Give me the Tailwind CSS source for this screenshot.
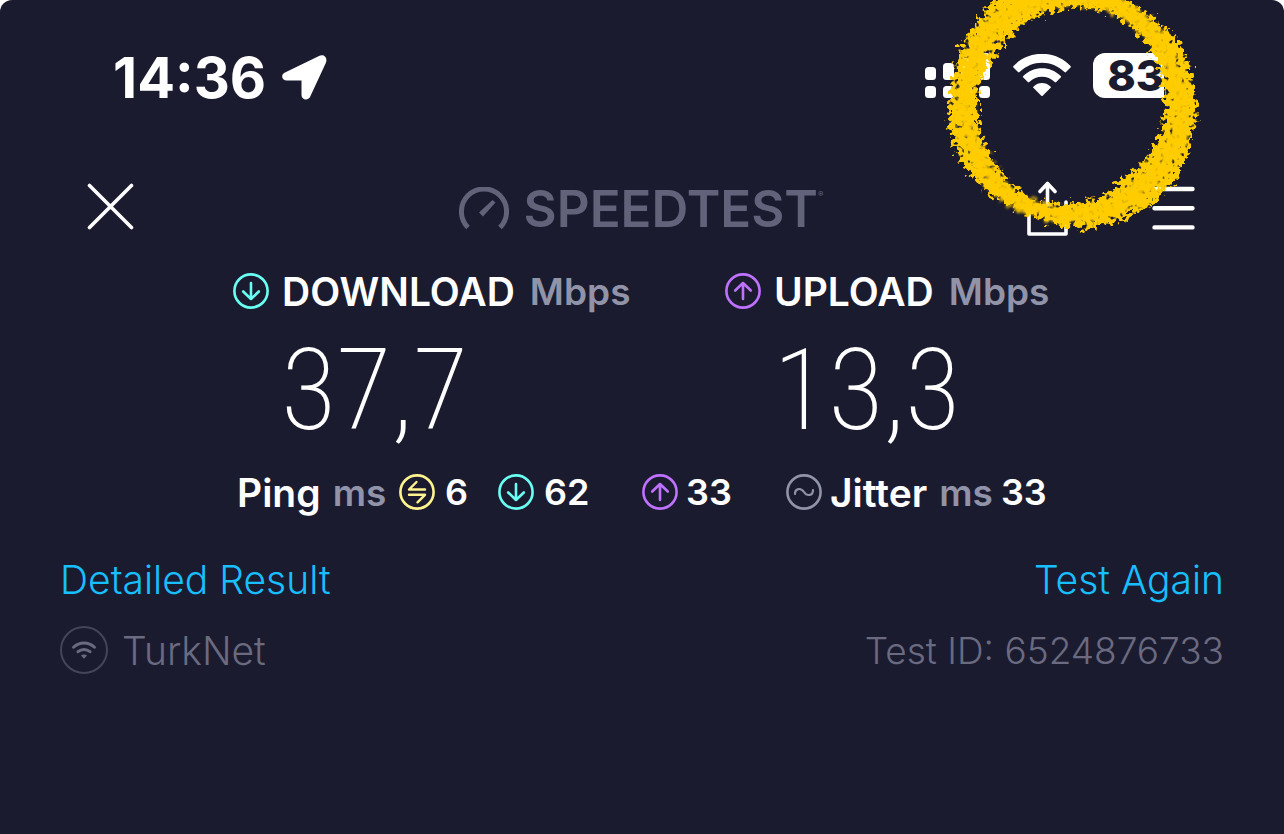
<!DOCTYPE html>
<html lang="en">
<head>
<meta charset="utf-8">
<meta name="viewport" content="width=device-width, initial-scale=1">
<title>Speedtest result</title>
<script src="https://cdn.jsdelivr.net/npm/@tailwindcss/browser@4"></script>
</head>
<body class="bg-white font-['Inter','Liberation_Sans',sans-serif]">
<svg class="hidden" aria-hidden="true">
  <symbol id="down" viewBox="0 0 36 36"><g fill="none" stroke="currentColor" stroke-width="2.6"><circle cx="18" cy="18" r="16.6"/><path d="M18 10v16M10.2 18.5 18 26l7.8-7.5" stroke-linecap="round" stroke-linejoin="round"/></g></symbol>
  <symbol id="up" viewBox="0 0 36 36"><g fill="none" stroke="currentColor" stroke-width="2.6"><circle cx="18" cy="18" r="16.6"/><path d="M18 26V10M10.2 17.5 18 10l7.8 7.5" stroke-linecap="round" stroke-linejoin="round"/></g></symbol>
</svg>
<div class="relative min-h-screen overflow-hidden rounded-t-xl bg-[#1b1b2f] text-white">
  <div class="flex h-[151px] items-center justify-between pr-30 pl-[113px]">
    <div class="flex items-center gap-4 pt-1">
      <time class="text-[56px] leading-none font-bold">14:36</time>
      <svg class="h-[45px] w-[45px]" viewBox="0 0 45 45" aria-label="Location"><path fill="#fff" d="M3 17.5 37 1c5-2.3 9 2 6.8 7L28 42c-2 4-8.500 3-8.500-2V25.500H5c-5.500 0-6.500-6-2-8Z"/></svg>
    </div>
    <div class="flex items-center">
      <svg class="h-[46px] w-[66px]" viewBox="0 0 66 46" fill="#fff" aria-label="Signal"><rect y="14" width="11" height="13" rx="3.500"/><rect x="18" y="10" width="11" height="17" rx="3.500"/><rect x="36" y="5" width="11" height="22" rx="3.500"/><rect x="54" y="0" width="11" height="27" rx="3.500"/><rect y="33" width="11" height="12" rx="3.500"/><rect x="18" y="33" width="11" height="12" rx="3.500"/><rect x="36" y="33" width="11" height="12" rx="3.500"/><rect x="54" y="33" width="11" height="12" rx="3.500"/></svg>
      <svg class="ml-[22px] h-[43px] w-[58px]" viewBox="0 0 58 43" aria-label="Wi-Fi"><path fill="#fff" d="M.5 13.500a1 1 0 0 1 0-1.500C16-4.300 42-4.300 57.500 12a1 1 0 0 1 0 1.500l-4.500 4.500a1 1 0 0 1-1.500 0C39 5.500 19 5.500 6.500 18a1 1 0 0 1-1.500 0ZM10.300 23.600a1 1 0 0 1 0-1.500c10.200-10.400 27.200-10.400 37.400 0a1 1 0 0 1 0 1.500l-4.500 4.500a1 1 0 0 1-1.500 0c-7-7-18.400-7-25.400 0a1 1 0 0 1-1.500 0ZM20.600 34a1 1 0 0 1 0-1.600c4.700-4.500 12.100-4.500 16.800 0a1 1 0 0 1 0 1.600l-7.700 7.700a1 1 0 0 1-1.400 0Z"/></svg>
      <div class="ml-[22px] flex h-[45px] w-[71px] items-center justify-end rounded-l-xl bg-white text-[43px] leading-none font-extrabold text-[#1b1b2f]">83</div>
    </div>
  </div>

  <header class="grid h-[111px] grid-cols-[1fr_auto_1fr] items-center pr-[89px] pl-[87px]">
    <button class="h-[47px] w-[47px]" aria-label="Close"><svg viewBox="0 0 47 47" fill="none" stroke="#fff" stroke-width="3.600" stroke-linecap="round"><path d="m2.500 2.500 42 42m0-42-42 42"/></svg></button>
    <div class="flex items-center gap-[15px] pt-1 text-[#62627a]">
      <svg class="h-[43px] w-[50px]" viewBox="0 0 50 43" fill="none" aria-hidden="true"><path d="M9 40.500A22.600 22.600 0 1 1 41 40.500" stroke="currentColor" stroke-width="5"/><path fill="currentColor" d="m33.500 13 3 2.500L24 29.500 20 25.500Z"/></svg>
      <h1 class="flex items-start text-[51px] leading-none font-semibold">SPEEDTEST<sup class="top-0 mt-[7px] text-[8px] leading-none">®</sup></h1>
    </div>
    <div class="flex items-center justify-end gap-[84px] pt-1">
      <button class="h-[56px] w-[41px]" aria-label="Share"><svg viewBox="0 0 41 56" fill="none" stroke="#fff" stroke-width="3.600" stroke-linecap="round" stroke-linejoin="round"><path d="M2 21v32h37V21M20.500 24V3M13 10.500 20.500 2.500l7.500 8"/></svg></button>
      <button class="h-[46px] w-[43px]" aria-label="Menu"><svg viewBox="0 0 43 46" stroke="#fff" stroke-width="4.400" stroke-linecap="round"><path d="M2.500 3h38M2.500 22.200h38M2.500 41.400h38"/></svg></button>
    </div>
  </header>

  <main>
    <div class="grid grid-cols-[492px_1fr] pl-[233px]">
      <section>
        <h2 class="flex h-[58px] items-center text-[39px] leading-none font-semibold"><svg class="mr-[13px] h-9 w-9 text-[#6afff3]"><use href="#down"/></svg>DOWNLOAD<span class="ml-[15px] text-[37px] text-[#9193a8]">Mbps</span></h2>
        <p class="ml-12 text-[114px] leading-[140px] font-extralight font-['Roboto_Condensed','Roboto',sans-serif]">37,7</p>
      </section>
      <section>
        <h2 class="flex h-[58px] items-center text-[39px] leading-none font-semibold"><svg class="mr-[13px] h-9 w-9 text-[#bf71ff]"><use href="#up"/></svg>UPLOAD<span class="ml-[15px] text-[37px] text-[#9193a8]">Mbps</span></h2>
        <p class="ml-12 text-[114px] leading-[140px] font-extralight font-['Roboto_Condensed','Roboto',sans-serif]">13,3</p>
      </section>
    </div>
    <div class="flex h-16 items-center pl-[237px] text-[36px] leading-none font-semibold">
      <span class="flex w-[162px] items-center gap-3 text-[39px]">Ping <span class="text-[37px] text-[#9193a8]">ms</span></span>
      <span class="flex w-[99px] items-center gap-[10px]"><svg class="h-9 w-9" viewBox="0 0 36 36" fill="none" stroke="#fff38e" stroke-width="2.600"><circle cx="18" cy="18" r="16.600"/><path stroke-width="2.400" stroke-linecap="round" stroke-linejoin="round" d="M26 15.500H10L17.500 8M10 20.800h16L18.500 28.300"/></svg>6</span>
      <span class="flex w-36 items-center gap-[10px]"><svg class="h-9 w-9 text-[#6afff3]"><use href="#down"/></svg>62</span>
      <span class="flex w-36 items-center gap-2"><svg class="h-9 w-9 text-[#bf71ff]"><use href="#up"/></svg>33</span>
      <span class="flex items-center gap-2 text-[39px]"><svg class="h-9 w-9" viewBox="0 0 36 36" fill="none" stroke="#9193a8" stroke-width="2.600" stroke-linecap="round"><circle cx="18" cy="18" r="16.600"/><path stroke-width="2.200" d="M9 20c0-6 6-6.500 9-2s9 4 9-2"/></svg>Jitter</span>
      <span class="ml-3 text-[37px] text-[#9193a8]">ms</span><span class="ml-2">33</span>
    </div>
    <div class="px-[60px] pt-[26px] text-[39px] leading-none font-light">
      <div class="flex h-[58px] items-center justify-between text-[#17bfff]"><a href="#details">Detailed Result</a><a href="#again">Test Again</a></div>
      <div class="mt-1 flex h-[76px] items-center justify-between text-[#6a6a80]">
        <span class="flex items-center gap-[14px]"><span class="flex h-12 w-12 items-center justify-center rounded-full border-2 border-[#454559]"><svg class="h-[18px] w-6" viewBox="0 0 24 18" aria-hidden="true"><path fill="none" stroke="currentColor" stroke-width="2.900" stroke-linecap="round" d="M1.500 6.200C7.500.600 16.500.600 22.500 6.200M6 10.700C9.500 7.700 14.500 7.700 18 10.700"/><path fill="currentColor" d="M9 14.600c1.600-1.500 4.400-1.500 6 0L12 17.800Z"/></svg></span>TurkNet</span>
        <span class="text-[37px]">Test ID: 6524876733</span>
      </div>
    </div>
  </main>

  <svg class="pointer-events-none absolute top-0 right-[74px] h-60 w-[270px]" viewBox="940 0 270 240" aria-hidden="true">
    <defs>
      <filter id="crayon" x="-10%" y="-10%" width="120%" height="120%">
        <feTurbulence type="fractalNoise" baseFrequency=".2" numOctaves="2" seed="4" result="n"/>
        <feDisplacementMap in="SourceGraphic" in2="n" scale="20" xChannelSelector="R" yChannelSelector="G" result="d"/>
        <feColorMatrix in="n" type="matrix" values="0 0 0 0 0  0 0 0 0 0  0 0 0 0 0  0 0 6 0 -1.400" result="g"/>
        <feComposite in="d" in2="g" operator="in"/>
        <feGaussianBlur stdDeviation=".7"/>
      </filter>
      <filter id="core" x="-10%" y="-10%" width="120%" height="120%">
        <feTurbulence type="fractalNoise" baseFrequency=".2" numOctaves="2" seed="9" result="n"/>
        <feDisplacementMap in="SourceGraphic" in2="n" scale="20" xChannelSelector="R" yChannelSelector="G"/>
        <feGaussianBlur stdDeviation=".8"/>
      </filter>
    </defs>
    <path filter="url(#crayon)" fill="#ffcc05" fill-rule="evenodd" d="M1000-5 1040-22 1085-22 1120-3 1150 15 1180 42 1192 75 1197 115 1188 153 1176 180 1150 206 1117 222 1080 229 1047 222 1013 207 987 193 960 160 947 123 952 83 960 47 983 13ZM1087 7 1113 13 1133 27 1150 48 1160 67 1166 100 1162 130 1147 157 1120 183 1100 198 1067 205 1033 200 1010 183 990 157 978 123 978 87 990 63 1007 40 1030 20 1057 10Z"/>
    <path filter="url(#core)" fill="none" stroke="#ffcc05" stroke-opacity=".9" stroke-width="15" d="M1000 20C1040-10 1110-10 1140 22 1165 44 1178 70 1181 105 1183 150 1150 185 1115 206 1085 222 1045 216 1015 200 988 183 970 150 965 112 964 75 975 42 1000 20Z"/>
  </svg>
</div>
</body>
</html>
